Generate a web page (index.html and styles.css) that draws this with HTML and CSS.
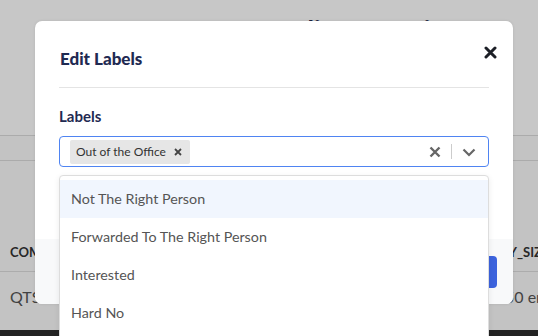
FILE: index.html
```html
<!DOCTYPE html>
<html lang="en">
<head>
  <meta charset="UTF-8">
  <title>Edit Labels</title>
  <link rel="stylesheet" href="styles.css">
</head>
<body>
  <div class="page">
    <div class="page-top">
      <div class="page-title">Replies Overview</div>
    </div>
    <div class="filters"></div>
    <div class="table">
      <div class="table-head">
        <span>COMPANY</span>
        <span>COMPANY_SIZE</span>
      </div>
      <div class="table-row">
        <span>QTS</span>
        <span class="size-cell">50 employees</span>
      </div>
    </div>
    <div class="bottom-bar"></div>
  </div>

  <div class="overlay">
    <div class="modal">
      <div class="modal-header">
        <div class="modal-title">Edit Labels</div>
        <button class="modal-close" aria-label="Close">
          <svg width="13" height="13" viewBox="0 0 13 13"><path d="M2 2 L11 11 M11 2 L2 11" stroke="#1c1f26" stroke-width="3" stroke-linecap="round"/></svg>
        </button>
      </div>
      <div class="modal-body">
        <div class="field-label">Labels</div>
        <div class="select">
          <div class="select-values">
            <div class="chip">
              <span class="chip-text">Out of the Office</span>
              <svg class="chip-x" width="8" height="8" viewBox="0 0 8 8"><path d="M1 1 L7 7 M7 1 L1 7" stroke="#444" stroke-width="1.8"/></svg>
            </div>
          </div>
          <div class="select-indicators">
            <svg width="14" height="14" viewBox="0 0 14 14"><path d="M2.5 2.5 L11.5 11.5 M11.5 2.5 L2.5 11.5" stroke="#666" stroke-width="2.4"/></svg>
            <span class="select-sep"></span>
            <svg width="14" height="14" viewBox="0 0 14 14"><path d="M1.5 4.5 L7 10 L12.5 4.5" stroke="#666" stroke-width="2.2" fill="none"/></svg>
          </div>
          <div class="menu">
            <div class="menu-item active">Not The Right Person</div>
            <div class="menu-item">Forwarded To The Right Person</div>
            <div class="menu-item">Interested</div>
            <div class="menu-item">Hard No</div>
          </div>
        </div>
      </div>
      <div class="modal-footer">
        <button class="btn-primary">Save</button>
      </div>
    </div>
  </div>
</body>
</html>
```
FILE: styles.css
```css
body {
  margin: 0;
  padding: 0;
  font-family: Lato, "Open Sans", Arial, sans-serif;
  background-color: #fff;
  overflow: hidden;
}

/* Page under the overlay */
.page {
  height: 336px;
  display: flex;
  flex-direction: column;
  background-color: #fafafa;
}

.page-top {
  height: 136px;
  display: flex;
  justify-content: center;
  padding-left: 190px;
  background-color: #fff;
  border-bottom: 1px solid #dcdcdc;
  box-sizing: border-box;
}

.page-title {
  margin-top: 14px;
  font-size: 26px;
  font-weight: bold;
  color: #1f2a52;
}

.filters {
  height: 25px;
  border-bottom: 1px solid #dcdcdc;
  box-sizing: border-box;
}

.table {
  flex: 1;
  padding-top: 71px;
}

.table-head,
.table-row {
  display: grid;
  grid-template-columns: 441px 1fr;
  padding: 0 10px;
  white-space: nowrap;
  align-items: center;
}

.table-head {
  height: 39px;
  font-size: 13px;
  font-weight: bold;
  color: #333;
  border-bottom: 1px solid #ddd;
}

.table-row {
  height: 49px;
  font-size: 16px;
  color: #555;
}

.size-cell {
  padding-left: 54px;
}

.bottom-bar {
  height: 6px;
  background-color: #2d2d2d;
}

/* Modal */
.overlay {
  position: absolute;
  inset: 0;
  background-color: rgba(0, 0, 0, 0.22);
}

.modal {
  position: absolute;
  left: 35px;
  top: 21px;
  width: 478px;
  background-color: #fff;
  border-radius: 7px;
  box-shadow: 0 0 3px rgba(0, 0, 0, 0.1);
}

.modal-header {
  margin: 0 24px;
  height: 66px;
  display: flex;
  justify-content: space-between;
  align-items: center;
  border-bottom: 1px solid #e4e4e4;
}

.modal-title {
  font-size: 17px;
  font-weight: 900;
  color: #1f2a52;
  margin-top: 8px;
  margin-left: 1px;
}

.modal-close {
  border: none;
  background: transparent;
  padding: 0;
  margin-right: -8px;
  margin-top: -4px;
  cursor: pointer;
  display: flex;
}

.modal-body {
  padding: 19px 24px 0;
  height: 132px;
}

.field-label {
  font-size: 15px;
  font-weight: bold;
  color: #1f2a52;
  margin-bottom: 11px;
}

.select {
  position: relative;
  height: 29px;
  border: 1px solid #4f84f2;
  border-radius: 4px;
  display: flex;
  align-items: center;
  justify-content: space-between;
}

.select-values {
  padding-left: 10px;
  display: flex;
}

.chip {
  display: flex;
  align-items: center;
  gap: 8px;
  background-color: #e6e6e6;
  border-radius: 2px;
  height: 24px;
  padding: 0 8px 0 6px;
}

.chip-text {
  font-size: 12px;
  color: #333;
}

.select-indicators {
  display: flex;
  align-items: center;
  gap: 10px;
  padding-right: 12px;
}

.select-sep {
  width: 1px;
  height: 15px;
  background-color: #ccc;
  margin-left: -1px;
}

.menu {
  position: absolute;
  left: -1px;
  right: -1px;
  top: 38px;
  background-color: #fff;
  border: 1px solid #ddd;
  border-radius: 4px;
  box-shadow: 0 2px 6px rgba(0, 0, 0, 0.08);
  padding-top: 4px;
  height: 200px;
}

.menu-item {
  height: 38px;
  line-height: 37px;
  padding-left: 11px;
  font-size: 14.3px;
  color: #555;
}

.menu-item.active {
  background-color: #f1f6fe;
}

.modal-footer {
  height: 65px;
  background-color: #f8f9fa;
  border-radius: 0 0 7px 7px;
  display: flex;
  justify-content: flex-end;
  align-items: center;
  padding: 0 16px;
}

.btn-primary {
  height: 32px;
  padding: 0 18px;
  border: none;
  border-radius: 4px;
  background-color: #3c63dd;
  color: #fff;
  font-size: 14px;
  font-weight: bold;
}
```
